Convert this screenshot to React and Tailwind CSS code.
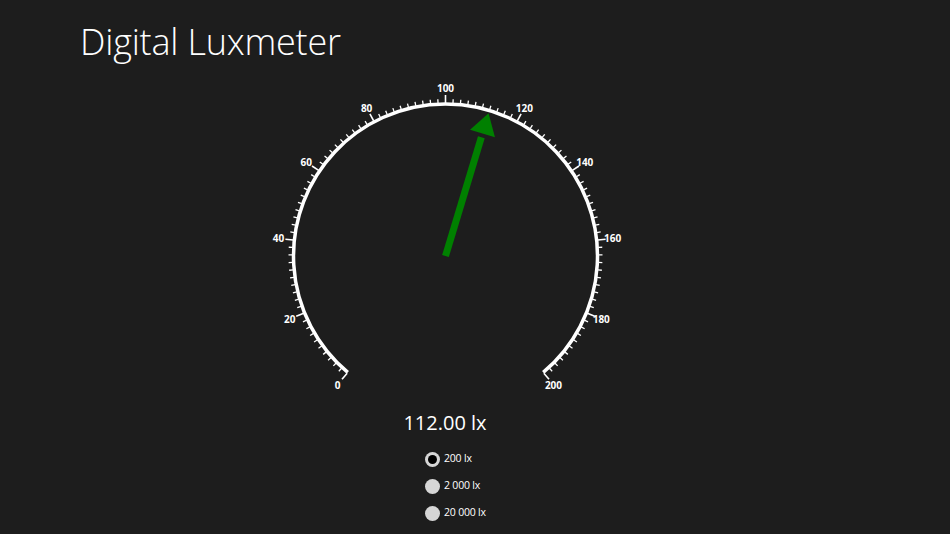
import { useState } from "react";

const CX = 180.5;
const CY = 181;
const R = 152;

// value 0..200 -> angle in degrees, clockwise from 12 o'clock
const toAngle = (v) => -140 + v * 1.4;

const polar = (r, deg) => {
    const a = (deg * Math.PI) / 180;
    return [CX + r * Math.sin(a), CY - r * Math.cos(a)];
};

function Gauge({ value }) {
    const [sx, sy] = polar(R, toAngle(0));
    const [ex, ey] = polar(R, toAngle(200));

    const ticks = [];
    for (let v = 0; v <= 200; v += 2) {
        const major = v % 20 === 0;
        const [x1, y1] = polar(R + 1, toAngle(v));
        const [x2, y2] = polar(R + (major ? 9 : 5), toAngle(v));
        ticks.push(
            <line key={v} x1={x1} y1={y1} x2={x2} y2={y2} stroke="white" strokeWidth={major ? 1.6 : 1.3} />
        );
    }

    const labels = [];
    for (let v = 0; v <= 200; v += 20) {
        const [x, y] = polar(168, toAngle(v));
        labels.push(
            <text key={v} x={x} y={y} fill="white" fontSize="10" fontWeight="700" textAnchor="middle" dominantBaseline="central">
                {v}
            </text>
        );
    }

    const ang = toAngle(value);
    const [bx, by] = polar(0, ang);
    const [nx, ny] = polar(124, ang);
    const [tx, ty] = polar(149, ang);
    const [l1x, l1y] = polar(Math.hypot(128, 13), ang - (Math.atan2(13, 128) * 180) / Math.PI);
    const [l2x, l2y] = polar(Math.hypot(128, 13), ang + (Math.atan2(13, 128) * 180) / Math.PI);

    return (
        <svg width="360" height="320" viewBox="0 0 360 320" className="block" style={{ fontFamily: '"Open Sans", "Noto Sans", sans-serif' }}>
            <path d={`M ${sx} ${sy} A ${R} ${R} 0 1 1 ${ex} ${ey}`} fill="none" stroke="white" strokeWidth="3.5" />
            {ticks}
            {labels}
            <line x1={bx} y1={by} x2={nx} y2={ny} stroke="#008000" strokeWidth="7" />
            <polygon points={`${tx},${ty} ${l1x},${l1y} ${l2x},${l2y}`} fill="#008000" />
        </svg>
    );
}

export default function App() {
    const [range, setRange] = useState("200 lx");
    const ranges = ["200 lx", "2 000 lx", "20 000 lx"];

    return (
        <div className="w-[950px] h-[534px] bg-[#1d1d1d] text-white overflow-hidden font-['Open_Sans','Noto_Sans',sans-serif]">
            <h1 className="pl-[80px] pt-[20px] text-[36px] font-light leading-[44px] tracking-[-0.2px]">
                Digital Luxmeter
            </h1>

            <div className="w-[890px] flex flex-col items-center mt-[11px]">
                <Gauge value={112} />

                <div className="mt-[15px] text-[20px] leading-[26px]">112.00 lx</div>
            </div>

            <div className="ml-[425px] mt-[15px] flex flex-col gap-[11px]">
                {ranges.map((r) => (
                    <button key={r} onClick={() => setRange(r)} className="flex items-center gap-[4px] h-[16px]">
                        {range === r ? (
                            <span className="w-[15px] h-[15px] rounded-full bg-[#d6d6d6] flex items-center justify-center">
                                <span className="w-[9px] h-[9px] rounded-full bg-black" />
                            </span>
                        ) : (
                            <span className="w-[15px] h-[15px] rounded-full bg-[#d6d6d6]" />
                        )}
                        <span className="text-[10.5px] tracking-[-0.2px] text-white">{r}</span>
                    </button>
                ))}
            </div>
        </div>
    );
}
